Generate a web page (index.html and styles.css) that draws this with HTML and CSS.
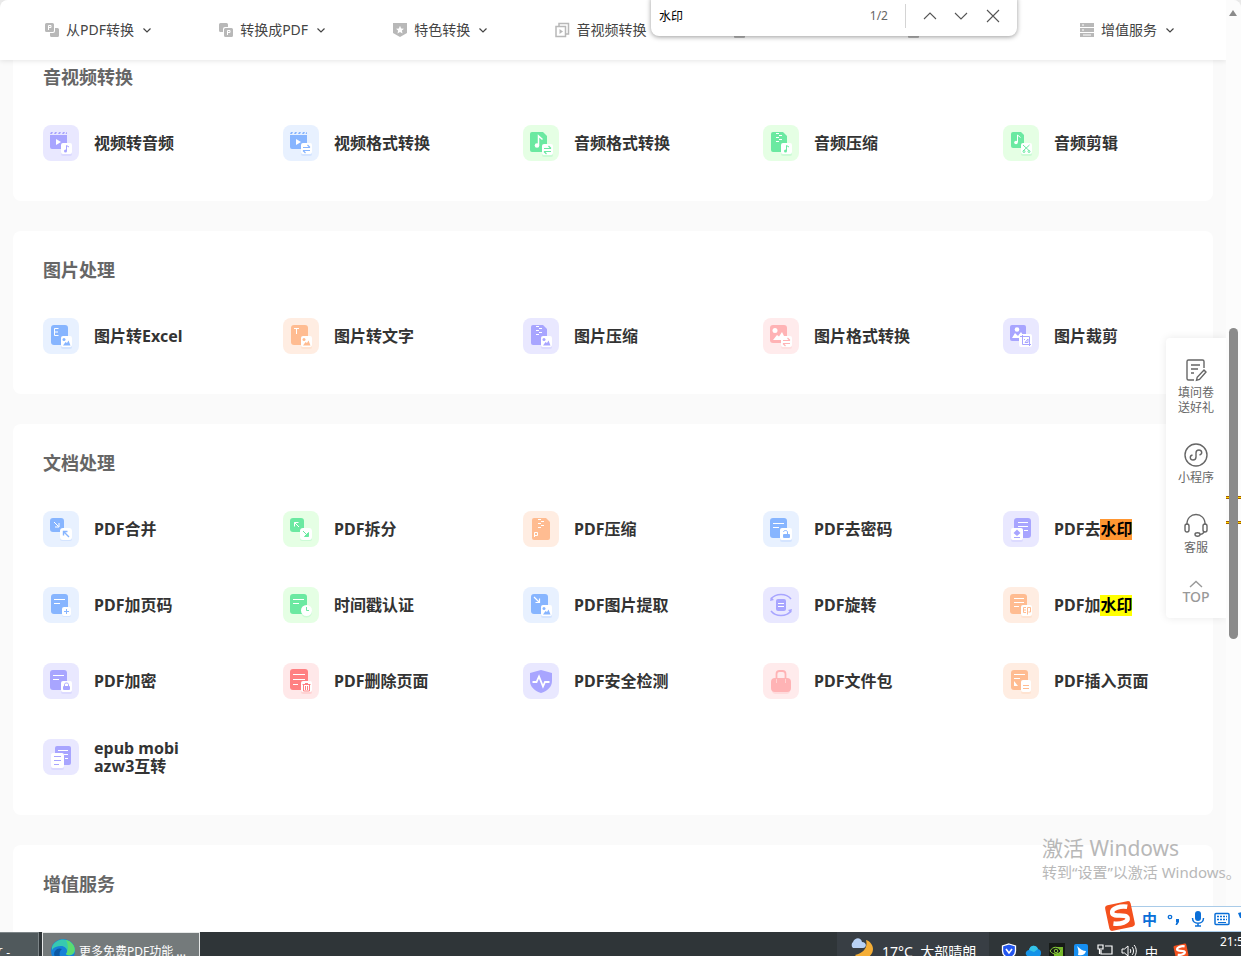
FILE: index.html
```
<!DOCTYPE html>
<html lang="zh-CN">
<head>
<meta charset="utf-8">
<title>更多免费PDF功能</title>
<link rel="stylesheet" href="styles.css">
</head>
<body>
<svg class="sprite" aria-hidden="true">
  <symbol id="doc" viewBox="0 0 36 36"><rect x="8" y="7" width="17" height="20" rx="3" fill="currentColor"/></symbol>
  <symbol id="lines" viewBox="0 0 36 36"><path d="M11 12.500h11M11 16.500h6" stroke="#fff"/></symbol>
  <symbol id="badge" viewBox="0 0 36 36"><rect x="18" y="19" width="11" height="12" rx="2" fill="currentColor" opacity=".2"/><rect x="18" y="18" width="11" height="11" rx="2" fill="#fff"/></symbol>
  <symbol id="note" viewBox="0 0 36 36"><use href="#badge"/><path d="M23.500 26v-5.500l2.500 1.500" fill="none" stroke="currentColor"/><circle cx="22.500" cy="26" r="1.500" fill="currentColor"/></symbol>
  <symbol id="swap" viewBox="0 0 36 36"><use href="#badge"/><path d="M20 22.500h7M24.500 20l2.500 2.500M27 25.500h-7M22.500 28L20 25.500" fill="none" stroke="currentColor" stroke-width="1.200"/></symbol>
  <symbol id="pic" viewBox="0 0 36 36"><use href="#badge"/><circle cx="21" cy="21.500" r="1.500" fill="currentColor"/><path d="M20 27.500l2.500-3.500 1.500 1 1.500-2.500 2 5z" fill="currentColor"/></symbol>
  <symbol id="video" viewBox="0 0 36 36"><path d="M7 9l1-2h2l-1 2zM11 9l1-2h2l-1 2zM15 9l1-2h2l-1 2zM19 9l1-2h2l-1 2zM22.500 9l1-2h.5v2zM7 10h17v14H9a2 2 0 0 1-2-2z" fill="currentColor"/><path d="M13 14l5 3-5 3z" fill="#fff"/></symbol>
  <symbol id="zip" viewBox="0 0 36 36"><path d="M10 7h10l4 4v14a2 2 0 0 1-2 2H10a2 2 0 0 1-2-2V9a2 2 0 0 1 2-2z" fill="currentColor"/><path d="M13 8.500h3M16 10.500h3M13 12.500h3M16 14.500h3M13 16.500h3" stroke="#fff"/></symbol>
  <symbol id="down" viewBox="0 0 10 10"><path d="M1.500 3.500L5 7l3.500-3.500" fill="none" stroke="#444" stroke-width="1.200"/></symbol>
  <symbol id="sogou" viewBox="0 0 32 32"><g transform="rotate(-12 16 16)"><rect x="3" y="3" width="26" height="26" rx="3" fill="#f4511e"/><path d="M25 8.500C19 6 9 6.500 9 11.500c0 5 14 3 14 8 0 4-8 5-15 2.500" fill="none" stroke="#fff" stroke-width="4.500"/></g></symbol>
</svg>

<div class="browser">
  <div class="page">
    <header class="topnav">
      <button class="nav-item"><svg viewBox="0 0 16 16"><path d="M2.500 1h6A1.500 1.500 0 0 1 10 2.500v6A1.500 1.500 0 0 1 8.500 10h-6A1.500 1.500 0 0 1 1 8.500v-6A1.500 1.500 0 0 1 2.500 1zM11 6h2.500A1.500 1.500 0 0 1 15 7.500v6a1.500 1.500 0 0 1-1.500 1.500h-6A1.500 1.500 0 0 1 6 13.500V11h3a2 2 0 0 0 2-2z" fill="#b8b8b8"/><path d="M4.500 8V3.500H7v2H4.500" fill="none" stroke="#fff"/></svg><span>从PDF转换</span><svg class="chev"><use href="#down"/></svg></button>
      <button class="nav-item"><svg viewBox="0 0 16 16"><path d="M2.500 1h6A1.500 1.500 0 0 1 10 2.500V5H7a2 2 0 0 0-2 2v3H2.500A1.500 1.500 0 0 1 1 8.500v-6A1.500 1.500 0 0 1 2.500 1zM7.500 6h6A1.500 1.500 0 0 1 15 7.500v6a1.500 1.500 0 0 1-1.500 1.500h-6A1.500 1.500 0 0 1 6 13.500v-6A1.500 1.500 0 0 1 7.500 6z" fill="#b8b8b8"/><path d="M9.500 13V8.500H12v2H9.500" fill="none" stroke="#fff"/></svg><span>转换成PDF</span><svg class="chev"><use href="#down"/></svg></button>
      <button class="nav-item"><svg viewBox="0 0 16 16"><path d="M1 1h14v10l-7 4-7-4z" fill="#b8b8b8"/><path d="M8 3.800l1.200 2.600 2.800.3-2.100 1.900.6 2.800L8 10l-2.500 1.400.6-2.800L4 6.700l2.800-.3z" fill="#fff"/></svg><span>特色转换</span><svg class="chev"><use href="#down"/></svg></button>
      <button class="nav-item"><svg viewBox="0 0 16 16"><path d="M5 4V1.500h9.500V12H12M2 4.500h9.500v10H2z" fill="none" stroke="#b8b8b8" stroke-width="1.500"/><path d="M5.500 7v5l3.500-2.500z" fill="#b8b8b8"/></svg><span>音视频转换</span><svg class="chev"><use href="#down"/></svg></button>
      <button class="nav-item covered" aria-label="图片处理"><svg viewBox="0 0 16 16"><rect x="3" y="2" width="11" height="14" rx="1" fill="#b8b8b8"/></svg></button>
      <button class="nav-item covered" aria-label="文档处理"><svg viewBox="0 0 16 16"><rect x="3" y="2" width="11" height="14" rx="1" fill="#b8b8b8"/></svg></button>
      <button class="nav-item"><svg viewBox="0 0 16 16"><path d="M1 1h14v4H1zM1 6h14v4H1zM1 11h14v4H1z" fill="#b8b8b8"/><path d="M3 3h2M3 8h2M4 13h8" stroke="#fff"/></svg><span>增值服务</span><svg class="chev"><use href="#down"/></svg></button>
    </header>

    <main class="content">
      <section class="card">
        <h2>音视频转换</h2>
        <div class="tools">
          <a class="tool" href="#"><svg class="tile purple" viewBox="0 0 36 36"><use href="#video"/><use href="#note"/></svg><span>视频转音频</span></a>
          <a class="tool" href="#"><svg class="tile blue" viewBox="0 0 36 36"><use href="#video"/><use href="#swap"/></svg><span>视频格式转换</span></a>
          <a class="tool" href="#"><svg class="tile green" viewBox="0 0 36 36"><path d="M9 7h11l4 4v14a2 2 0 0 1-2 2H9a2 2 0 0 1-2-2V9a2 2 0 0 1 2-2z" fill="currentColor"/><path d="M15.500 20v-9l4 3.500" fill="none" stroke="#fff" stroke-width="1.500"/><circle cx="14" cy="20.500" r="2.300" fill="#fff"/><use href="#swap" x="1" y="1"/></svg><span>音频格式转换</span></a>
          <a class="tool" href="#"><svg class="tile green" viewBox="0 0 36 36"><use href="#zip"/><use href="#note"/></svg><span>音频压缩</span></a>
          <a class="tool" href="#"><svg class="tile green" viewBox="0 0 36 36"><path d="M10 7h8l3 3v11a2 2 0 0 1-2 2h-9a2 2 0 0 1-2-2V9a2 2 0 0 1 2-2z" fill="currentColor"/><path d="M14.500 17v-7l3 2.500" fill="none" stroke="#fff"/><circle cx="13" cy="17.500" r="1.800" fill="#fff"/><use href="#badge"/><path d="M20 20l6.500 6M26.500 20L20 26" stroke="currentColor"/><g fill="none" stroke="currentColor"><circle cx="21" cy="26.500" r="1"/><circle cx="26" cy="26.500" r="1"/></g></svg><span>音频剪辑</span></a>
        </div>
      </section>

      <section class="card">
        <h2>图片处理</h2>
        <div class="tools">
          <a class="tool" href="#"><svg class="tile blue" viewBox="0 0 36 36"><use href="#doc"/><path d="M15.500 10.500h-4v7h4M11.500 14h3.500" fill="none" stroke="#fff"/><use href="#pic"/></svg><span>图片转Excel</span></a>
          <a class="tool" href="#"><svg class="tile orange" viewBox="0 0 36 36"><use href="#doc"/><path d="M11 10.500h5M13.500 10.500V16" stroke="#fff"/><use href="#pic"/></svg><span>图片转文字</span></a>
          <a class="tool" href="#"><svg class="tile purple" viewBox="0 0 36 36"><use href="#zip"/><use href="#pic"/></svg><span>图片压缩</span></a>
          <a class="tool" href="#"><svg class="tile pink" viewBox="0 0 36 36"><rect x="7" y="7" width="17" height="18" rx="3" fill="currentColor"/><circle cx="12" cy="12.500" r="2.500" fill="#fff"/><path d="M10 22l4-5 2 1.500 3-4.500 4 8z" fill="#fff"/><use href="#swap"/></svg><span>图片格式转换</span></a>
          <a class="tool" href="#"><svg class="tile purple" viewBox="0 0 36 36"><rect x="7" y="7" width="16" height="16" rx="2" fill="currentColor"/><circle cx="14" cy="11.500" r="2.300" fill="#fff"/><path d="M9 20l3-5 3 3 3-4 4 6z" fill="#fff"/><rect x="16" y="16" width="13" height="13" rx="2" fill="#fff"/><path d="M19.500 17v9.500H28M17 18.500h9.500V28M22 24.500l3-3.500v3.500zM21.500 21v1" fill="none" stroke="currentColor"/></svg><span>图片裁剪</span></a>
        </div>
      </section>

      <section class="card">
        <h2>文档处理</h2>
        <div class="tools">
          <a class="tool" href="#"><svg class="tile blue" viewBox="0 0 36 36"><rect x="7" y="7" width="14" height="14" rx="3" fill="currentColor"/><path d="M11 11l4.500 4.500M16 12v4h-4" fill="none" stroke="#fff"/><rect x="17" y="18" width="12" height="12" rx="2" fill="currentColor" opacity=".2"/><rect x="17" y="17" width="12" height="12" rx="3" fill="#fff"/><path d="M20.500 20.500l5.500 5.500M20.500 24.500v-4h4" fill="none" stroke="currentColor" stroke-width="1.400"/></svg><span>PDF合并</span></a>
          <a class="tool" href="#"><svg class="tile green" viewBox="0 0 36 36"><rect x="7" y="7" width="14" height="14" rx="3" fill="currentColor"/><path d="M11.500 11.500L16 16M11.500 15.500v-4h4" fill="none" stroke="#fff"/><rect x="17" y="18" width="12" height="12" rx="2" fill="currentColor" opacity=".2"/><rect x="17" y="17" width="12" height="12" rx="3" fill="#fff"/><path d="M20 20l5 5M25.500 21.500v4h-4z" fill="currentColor" stroke="currentColor"/></svg><span>PDF拆分</span></a>
          <a class="tool" href="#"><svg class="tile orange" viewBox="0 0 36 36"><path d="M11 7h12l4 4v16a2 2 0 0 1-2 2H11a2 2 0 0 1-2-2V9a2 2 0 0 1 2-2z" fill="currentColor"/><path d="M15 8.500h3M18 10.500h3M15 12.500h3M18 14.500h3M15 16.500h3M11.500 26v-4.500h3v3h-3" fill="none" stroke="#fff"/></svg><span>PDF压缩</span></a>
          <a class="tool" href="#"><svg class="tile blue" viewBox="0 0 36 36"><use href="#doc" x="-1"/><use href="#lines" x="-1"/><rect x="17" y="19" width="12" height="12" rx="2" fill="currentColor" opacity=".2"/><rect x="17" y="17" width="12" height="12" rx="2" fill="#fff"/><rect x="20" y="23" width="7" height="4" rx="1" fill="currentColor"/><path d="M20.500 21c0-2 4-2 4 0v2" fill="none" stroke="currentColor"/></svg><span>PDF去密码</span></a>
          <a class="tool" href="#"><svg class="tile purple" viewBox="0 0 36 36"><use href="#doc" x="3"/><path d="M15 11.500h10M15 15.500h10M21 19.500h4" stroke="#fff"/><rect x="8" y="18" width="12" height="13" rx="2" fill="currentColor" opacity=".2"/><rect x="8" y="17" width="12" height="12" rx="2" fill="#fff"/><path d="M14 18.500l3.500 3.500-3.500 3-3.500-3zM11 26h6v1h-6z" fill="currentColor"/></svg><span>PDF去<mark class="current">水印</mark></span></a>
          <a class="tool" href="#"><svg class="tile blue" viewBox="0 0 36 36"><use href="#doc"/><use href="#lines"/><rect x="19" y="21" width="9" height="9" rx="2" fill="currentColor" opacity=".2"/><rect x="19" y="20" width="9" height="9" rx="2" fill="#fff"/><path d="M23.500 22v5M21 24.500h5" stroke="currentColor"/></svg><span>PDF加页码</span></a>
          <a class="tool" href="#"><svg class="tile green" viewBox="0 0 36 36"><use href="#doc" x="-1"/><use href="#lines" x="-1"/><circle cx="23.500" cy="25" r="5.500" fill="currentColor" opacity=".2"/><circle cx="23.500" cy="23.500" r="5.500" fill="#fff"/><path d="M23.500 20v3.500H26" fill="none" stroke="currentColor"/></svg><span>时间戳认证</span></a>
          <a class="tool" href="#"><svg class="tile blue" viewBox="0 0 36 36"><use href="#doc"/><path d="M11 10l5 5M16.500 11.500v4h-4" fill="none" stroke="#fff" stroke-width="1.200"/><use href="#pic"/></svg><span>PDF图片提取</span></a>
          <a class="tool" href="#"><svg class="tile purple" viewBox="0 0 36 36"><rect x="13" y="12" width="10" height="12" rx="2" fill="currentColor"/><path d="M15 16.500h6M15 19.500h6" stroke="#fff"/><path d="M28 12a12 10 0 0 0-20 0M8 24a12 10 0 0 0 20 0" fill="none" stroke="currentColor" stroke-width="1.500"/><path d="M7 14l1-4 3 3zM29 22l-1 4-3-3z" fill="currentColor"/></svg><span>PDF旋转</span></a>
          <a class="tool" href="#"><svg class="tile orange" viewBox="0 0 36 36"><use href="#doc" x="-1"/><path d="M11 11.500h10M11 15.500h10M11 19.500h5" stroke="#fff"/><use href="#badge"/><path d="M23 20.500h-2.500v5H23M20.500 23H23M24.500 27.500v-7h3v4.500h-2" fill="none" stroke="currentColor"/></svg><span>PDF加<mark>水印</mark></span></a>
          <a class="tool" href="#"><svg class="tile purple" viewBox="0 0 36 36"><use href="#doc" x="-1"/><use href="#lines" x="-1"/><use href="#badge"/><rect x="20" y="23" width="7" height="4" rx="1" fill="currentColor"/><path d="M21.500 23v-1.500c0-2 4-2 4 0V23" fill="none" stroke="currentColor"/></svg><span>PDF加密</span></a>
          <a class="tool" href="#"><svg class="tile red" viewBox="0 0 36 36"><rect x="7" y="6" width="18" height="21" rx="3" fill="currentColor"/><path d="M10 11.500h12M10 16.500h12M10 21.500h5" stroke="#fff"/><use href="#badge"/><path d="M19.500 21.500h8M22 20.500h3M20.500 22v6h6v-6M22.500 23v4M24.500 23v4" fill="none" stroke="currentColor"/></svg><span>PDF删除页面</span></a>
          <a class="tool" href="#"><svg class="tile purple" viewBox="0 0 36 36"><path d="M18 7l11 3v8c0 6-5 10-11 12-6-2-11-6-11-12v-8z" fill="currentColor"/><path d="M9.500 19h4l2.500-5.500 4 10 2-4.500h4.500" fill="none" stroke="#fff" stroke-width="1.800"/></svg><span>PDF安全检测</span></a>
          <a class="tool" href="#"><svg class="tile pink" viewBox="0 0 36 36"><rect x="9" y="17" width="18" height="14" rx="4" fill="currentColor" opacity=".3"/><rect x="8" y="15" width="20" height="14" rx="4" fill="currentColor"/><path d="M13.500 18v-7q0-3 3-3h3q3 0 3 3v7" fill="none" stroke="currentColor" stroke-width="1.800"/><path d="M13.500 16v4M22.500 16v4" stroke="#ffd3d3"/></svg><span>PDF文件包</span></a>
          <a class="tool" href="#"><svg class="tile orange" viewBox="0 0 36 36"><use href="#doc"/><use href="#lines" y="-1"/><path d="M11 18l4 5h-4z" fill="#fff"/><rect x="18" y="19" width="10" height="12" rx="2" fill="currentColor" opacity=".2"/><rect x="18" y="17" width="10" height="12" rx="2" fill="#fff"/><path d="M20 22.500h6M20 25.500h6" stroke="currentColor"/></svg><span>PDF插入页面</span></a>
          <a class="tool" href="#"><svg class="tile purple" viewBox="0 0 36 36"><rect x="12" y="7" width="16" height="19" rx="2" fill="currentColor"/><path d="M15 11.500h10M21 15.500h4M22 19.500h3" stroke="#fff"/><rect x="8" y="16" width="13" height="15" rx="2" fill="currentColor" opacity=".2"/><rect x="8" y="14" width="13" height="15" rx="2" fill="#fff"/><path d="M11 17.500h7M11 21.500h7M11 25.500h5" stroke="currentColor"/></svg><span>epub mobi azw3互转</span></a>
        </div>
      </section>

      <section class="card">
        <h2>增值服务</h2>
        <div class="tools"></div>
      </section>
    </main>

    <aside class="side">
      <button><svg viewBox="0 0 24 24"><path d="M10 22H4.500A1.500 1.500 0 0 1 3 20.500v-17A1.500 1.500 0 0 1 4.500 2h14A1.500 1.500 0 0 1 20 3.500V10M7 7h9M7 11h7M7 15h3M20 12l2 2-6.500 7.500-3 .8.700-3z"/></svg><span>填问卷<br>送好礼</span></button>
      <button><svg viewBox="0 0 24 24"><circle cx="12" cy="12" r="11"/><path d="M8.500 12C5 13 6 17 9 17c2 0 3-1 3-3v-4c0-2 1-3 3-3 3 0 4 4 .5 5"/></svg><span>小程序</span></button>
      <button><svg viewBox="0 0 24 24"><path d="M3 12C2 -2 22 -2 21 12M20 18c0 3-2 3-4 3.500"/><rect x="1" y="11" width="4" height="8" rx="2"/><rect x="19" y="11" width="4" height="8" rx="2"/><ellipse cx="13.500" cy="21.500" rx="2.500" ry="1.700"/></svg><span>客服</span></button>
      <button class="to-top"><svg viewBox="0 0 16 8"><path d="M2 7l6-5.500L14 7"/></svg><span>TOP</span></button>
    </aside>
  </div>

  <div class="scrollbar"><i class="arrow"></i><i class="hit first"></i><i class="hit second"></i><i class="thumb"></i></div>

  <form class="find">
    <input type="text" value="水印" aria-label="在页面上查找">
    <output>1/2</output>
    <button type="button" aria-label="上一个"><svg viewBox="0 0 14 14"><path d="M1 10l6-6 6 6"/></svg></button>
    <button type="button" aria-label="下一个"><svg viewBox="0 0 14 14"><path d="M1 4l6 6 6-6"/></svg></button>
    <button type="button" aria-label="关闭"><svg viewBox="0 0 14 14"><path d="M1 1l12 12M13 1L1 13"/></svg></button>
  </form>

  <div class="activate"><p class="big">激活 Windows</p><p>转到“设置”以激活 Windows。</p></div>

  <div class="ime">
    <svg class="logo" viewBox="0 0 32 32"><use href="#sogou"/></svg>
    <div class="ime-keys">
      <b>中</b>
      <svg viewBox="0 0 16 16"><circle cx="4" cy="6" r="1.700" fill="none" stroke="#0a6fd8" stroke-width="1.300"/><path d="M10 8h3v3l-2 3h-1.500l1-3H10z" fill="#0a6fd8"/></svg>
      <svg viewBox="0 0 16 16"><rect x="5" y="0" width="6" height="10" rx="3" fill="#0a6fd8"/><path d="M2.500 7c0 7 11 7 11 0M8 12v3.500M5 15h6" fill="none" stroke="#0a6fd8" stroke-width="1.500"/></svg>
      <svg viewBox="0 0 16 16"><rect x="1" y="2.500" width="14" height="11" rx="1" fill="none" stroke="#0a6fd8" stroke-width="1.500"/><path d="M3 5.500h10M3 8.500h10" stroke="#0a6fd8" stroke-width="1.500" stroke-dasharray="2 1"/><path d="M4 11.500h8" stroke="#0a6fd8"/></svg>
      <svg viewBox="0 0 16 16"><path d="M0 2l4-1h8l4 3-3 3v8H4V7H2z" fill="#0a6fd8"/></svg>
    </div>
  </div>
</div>

<footer class="taskbar">
  <div class="strip">
    <button class="task">文 -</button>
    <button class="task active"><svg viewBox="0 0 24 24"><circle cx="12" cy="12" r="12" fill="#1681d8"/><path d="M1 8C5-3 23-2 24 11c0 5-6 7-9 4 3-3 0-8-5-8-4 0-7 1-9 4z" fill="#37c9b0"/><path d="M15 1c7 2 10 8 8 12-2 4-7 4-8 2 3-4 2-10 0-14z" fill="#5bdc70"/><path d="M11 10c-4 3-3 9 2 13-7 0-12-7-9-11 2-3 5-3 7-2z" fill="#0c59a4"/></svg><span>更多免费PDF功能 ...</span></button>
    <div class="gap"></div>
    <div class="weather"><svg viewBox="0 0 24 24"><path d="M17 3c2 7-2 13-11 15 6 7 18 3 18-6 0-4-3-8-7-9z" fill="#f5ae36"/><path d="M4 11a4 4 0 0 1 0-6c2-5 8-5 9 0 5 0 5 6 1 6z" fill="#b9d2f5"/></svg><span>17°C&nbsp; 大部晴朗</span></div>
    <div class="tray">
      <svg viewBox="0 0 16 16"><path d="M8 1l6.500 2v5c0 4-3 6-6.500 7.500C4.500 14 1.500 12 1.500 8V3z" fill="#2356f0" stroke="#fff" stroke-width="1.300"/><path d="M5 6l3 4 3-4" fill="none" stroke="#fff" stroke-width="1.600"/></svg>
      <svg viewBox="0 0 16 16"><path d="M2 13c-3-3 0-6 2-6 1-5 7-6 9-1 4 1 4 6 1 8z" fill="#1493e8"/><path d="M4 7c1-5 7-6 9-1L9 9z" fill="#35c4e8"/></svg>
      <svg viewBox="0 0 16 16"><path d="M0 0h16v16H0z" fill="#161a16"/><path d="M5 4h9v9H5z" fill="#76b82a"/><path d="M1 8c3-5 8-5 11 0-3 4-8 4-11 0z" fill="#161a16" stroke="#8bd13a"/><circle cx="7" cy="8" r="1.800" fill="none" stroke="#8bd13a"/></svg>
      <svg viewBox="0 0 16 16"><rect x="1" y="1" width="14" height="14" rx="2" fill="#168ff2"/><path d="M4 3c1 3 2 5 1 9 4 1 7 0 8-4-3 0-6-2-9-5z" fill="#fff"/></svg>
      <svg viewBox="0 0 16 16"><path d="M1 2h5v4H1zM8 3h7v8H4V7M2.500 6v5M7 14h5" fill="none" stroke="#fff" stroke-width="1.200"/></svg>
      <svg viewBox="0 0 16 16"><path d="M1 6h2.500L7 3v10L3.500 10H1zM9 6c1 1 1 3 0 4M11 4c2 2 2 6 0 8M13 2c3 3 3 9 0 12" fill="none" stroke="#fff"/></svg>
      <span>中</span>
      <svg viewBox="0 0 32 32"><use href="#sogou"/></svg>
    </div>
    <time>21:5</time>
  </div>
</footer>
</body>
</html>
```
FILE: styles.css
```
* { box-sizing: border-box; }
body {
  margin: 0;
  height: 100vh;
  display: flex;
  flex-direction: column;
  overflow: hidden;
  background: #e9e9e9;
  color: #333;
  font-family: "Noto Sans", "Noto Sans CJK SC", sans-serif;
}
button { border: 0; padding: 0; background: none; font: inherit; color: inherit; }
h2, p { margin: 0; }
svg { flex: none; display: block; }
.sprite { position: absolute; width: 0; height: 0; }

.browser {
  position: relative;
  flex: 1;
  min-height: 0;
  display: flex;
  overflow: hidden;
  border-radius: 8px 8px 0 0;
  background: #fafafa;
}
.page { position: relative; flex: 1; overflow: hidden; }

.topnav {
  position: relative;
  z-index: 2;
  height: 60px;
  padding: 0 51px 0 44px;
  display: flex;
  justify-content: space-between;
  align-items: center;
  background: #fff;
  box-shadow: 0 1px 5px rgba(0, 0, 0, .1);
  font-size: 14px;
  color: #444;
}
.nav-item { display: flex; align-items: center; gap: 6px; white-space: nowrap; line-height: 20px; }
.nav-item svg { width: 16px; height: 16px; }
.nav-item .chev { width: 10px; height: 10px; margin-left: 2px; }
.covered { width: 108px; }

.content {
  max-width: 1200px;
  margin: -22px auto 0;
  display: flex;
  flex-direction: column;
  gap: 30px;
}
.card { padding: 24px 30px 0; border-radius: 8px; background: #fff; }
.card h2 { margin-bottom: 33px; font-size: 18px; line-height: 30px; color: #666; }
.tools { display: grid; grid-template-columns: repeat(5, 240px); min-height: 76px; }
.tool {
  display: flex;
  align-items: center;
  gap: 15px;
  height: 36px;
  margin-bottom: 40px;
  color: #333;
  font-size: 16px;
  font-weight: 700;
  line-height: 18px;
  text-decoration: none;
}
.tool span { max-width: 120px; }
.tile { width: 36px; height: 36px; border-radius: 8px; }
.purple { color: #a8a5ff; background: #e9e8ff; }
.blue { color: #87b5ff; background: #e8f1ff; }
.green { color: #6be9a1; background: #e5ffe4; }
.orange { color: #ffbc91; background: #ffede2; }
.pink { color: #ffb3b5; background: #ffebec; }
.red { color: #ff8082; background: #ffe8e9; }
mark { background: #ff0; color: #000; }
mark.current { background: #ff9632; }
.tool mark { display: inline-block; height: 21px; line-height: 21px; margin: -2px 0; }

.side {
  position: absolute;
  z-index: 3;
  top: 338px;
  right: 0;
  width: 60px;
  height: 280px;
  padding-top: 20px;
  display: flex;
  flex-direction: column;
  align-items: center;
  gap: 28px;
  border-radius: 4px 0 0 4px;
  background: #fff;
  box-shadow: 0 0 8px rgba(0, 0, 0, .09);
  color: #666;
  font-size: 12px;
  line-height: 15px;
}
.side button { display: flex; flex-direction: column; align-items: center; gap: 3px; }
.side svg { width: 24px; height: 24px; fill: none; stroke: #666; stroke-width: 1.4; }
.side .to-top { gap: 0; margin-top: -3px; color: #999; font-size: 14px; font-weight: 500; line-height: 18px; }
.side .to-top svg { width: 16px; height: 8px; stroke: #999; }

.scrollbar { position: relative; width: 15px; background: #fcfcfc; }
.scrollbar i { position: absolute; }
.arrow { left: 3px; top: 10px; border: 4px solid transparent; border-top: 0; border-bottom: 6px solid #8b8b8b; }
.thumb { left: 3px; top: 328px; width: 9px; height: 311px; border-radius: 5px; background: #8b8b8b; }
.hit { left: 0; right: 0; height: 3px; background: #fd0; border: solid #a35a00; border-width: 1px 0; }
.first { top: 496px; }
.second { top: 521px; }

.find {
  position: absolute;
  z-index: 4;
  top: -7px;
  right: 224px;
  width: 366px;
  height: 43px;
  padding: 7px 8px 0;
  display: flex;
  align-items: center;
  border-radius: 8px;
  background: #fff;
  box-shadow: 0 1px 5px rgba(0, 0, 0, .4);
  font-size: 12px;
}
.find input { flex: 1; min-width: 0; border: 0; padding: 0 0 5px; outline: 0; background: none; font: inherit; color: #000; }
.find output { padding: 0 17px 5px 0; color: #666; }
.find output + button { border-left: 1px solid #d4d4d4; padding-left: 8px; width: 40px; }
.find button { width: 32px; height: 24px; margin-bottom: 4px; display: grid; place-items: center; }
.find svg { width: 14px; height: 14px; fill: none; stroke: #555; stroke-width: 1.1; }

.activate { position: absolute; z-index: 5; right: 0; bottom: 49px; width: 199px; color: #b8b8b8; font-size: 15px; line-height: 22px; white-space: nowrap; }
.activate .big { font-size: 21px; line-height: 26px; }

.ime { position: absolute; z-index: 5; right: 0; bottom: 0; width: 137px; height: 30px; display: flex; align-items: flex-end; }
.ime-keys { flex: 1; height: 26px; margin-left: -16px; padding-left: 22px; display: flex; align-items: center; gap: 8px; overflow: hidden; border: solid #a9cbe8; border-width: 1px 0; background: #fff; color: #0a6fd8; font-size: 15px; line-height: 18px; }
.ime-keys svg { width: 16px; height: 16px; }
.ime-keys b { width: 16px; margin-right: 1px; }
.logo { position: relative; z-index: 1; width: 32px; height: 32px; }

.taskbar { height: 24px; overflow: hidden; background: #2f3538; color: #fff; font-size: 12px; }
.strip { height: 38px; display: flex; align-items: stretch; }
.task { width: 39px; padding: 0 28px 0 0; margin-right: 3px; display: flex; align-items: center; justify-content: flex-end; white-space: nowrap; overflow: hidden; background: #50595c; border: solid #7d8588; border-width: 1px 1px 0 0; }
.task.active { width: 158px; padding: 0 0 0 8px; gap: 4px; justify-content: flex-start; background: #747a7b; border: 1px solid #e6e8e8; }
.task svg { width: 24px; height: 24px; }
.gap { flex: 1; }
.weather { width: 152px; padding-left: 12px; display: flex; align-items: center; gap: 9px; background: #383e44; font-size: 14px; white-space: nowrap; }
.weather svg { width: 24px; height: 24px; margin-bottom: 4px; }
.tray { width: 231px; padding-left: 12px; display: flex; align-items: center; gap: 8px; font-size: 13px; }
.tray svg { width: 16px; height: 16px; }
.tray span { width: 16px; margin-right: 4px; }
time { width: 21px; overflow: hidden; line-height: 20px; }
```
